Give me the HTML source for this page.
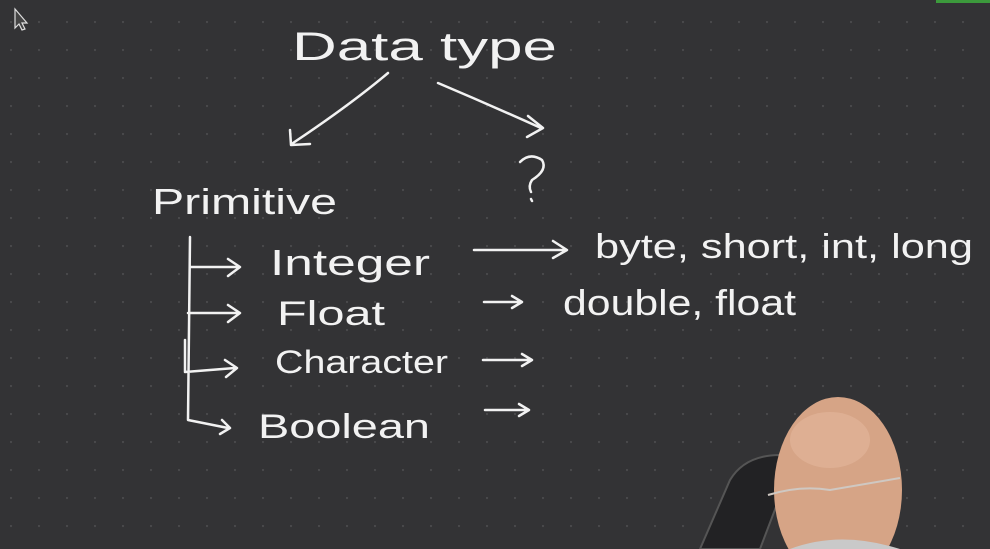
<!DOCTYPE html>
<html><head><style>
html,body{margin:0;padding:0;background:#333335;width:990px;height:549px;overflow:hidden}
svg{position:absolute;left:0;top:0;display:block}
.t{font-family:"Liberation Sans",sans-serif;fill:#f2f2f2;font-weight:normal}
</style></head><body>
<svg width="990" height="549" viewBox="0 0 990 549">
<defs><pattern id="d" x="10" y="21" width="28" height="28" patternUnits="userSpaceOnUse"><circle cx="1" cy="1" r="1.1" fill="#4a4a4c"/></pattern></defs>
<rect width="990" height="549" fill="#333335"/>
<rect width="990" height="549" fill="url(#d)"/>
<rect x="936" y="0" width="54" height="3" fill="#3c9a3c"/>
<path d="M15 9 L15 28 L19 24 L22 30 L25 29 L22 23 L27 23 Z" fill="#444" stroke="#ddd" stroke-width="1.2"/>
<g fill="none" stroke="#f2f2f2" stroke-width="2.5" stroke-linecap="round" stroke-linejoin="round">
<path d="M388 73 Q350 105 293 143 M290 130 L291 145 L310 144"/>
<path d="M438 83 Q490 105 541 128 M528 116 L543 128 L527 137"/>
<path d="M520 162 Q530 152 542 160 Q548 170 532 180 Q528 186 531 192 M531 199 L532 201"/>
<path d="M190 237 L188 420 L228 428 M190 267 L238 267 M228 259 L240 267 L228 276 M188 313 L238 313 M228 305 L240 313 L228 322 M185 340 L185 372 L235 368 M225 360 L237 368 L226 377 M222 420 L230 428 L220 434"/>
<path d="M474 250 L565 250 M553 241 L567 250 L553 258"/>
<path d="M484 302 L520 302 M512 296 L522 302 L512 308"/>
<path d="M483 360 L530 360 M522 354 L532 360 L522 366"/>
<path d="M485 410 L527 410 M519 404 L529 410 L519 416"/>
</g>
<text class="t" x="292" y="60" font-size="40" textLength="265" lengthAdjust="spacingAndGlyphs">Data  type</text>
<text class="t" x="152" y="214" font-size="36" textLength="185" lengthAdjust="spacingAndGlyphs">Primitive</text>
<text class="t" x="270" y="275" font-size="36" textLength="160" lengthAdjust="spacingAndGlyphs">Integer</text>
<text class="t" x="277" y="325" font-size="34" textLength="108" lengthAdjust="spacingAndGlyphs">Float</text>
<text class="t" x="275" y="373" font-size="32" textLength="173" lengthAdjust="spacingAndGlyphs">Character</text>
<text class="t" x="258" y="438" font-size="34" textLength="172" lengthAdjust="spacingAndGlyphs">Boolean</text>
<text class="t" x="595" y="258" font-size="34" textLength="378" lengthAdjust="spacingAndGlyphs">byte, short, int, long</text>
<text class="t" x="563" y="315" font-size="36" textLength="233" lengthAdjust="spacingAndGlyphs">double, float</text>
<path d="M700 549 L730 480 Q745 455 780 455 L790 470 L760 549 Z" fill="#222224" stroke="#555" stroke-width="2"/>
<ellipse cx="838" cy="490" rx="64" ry="93" fill="#d6a486"/>
<ellipse cx="830" cy="440" rx="40" ry="28" fill="#e3b89c" opacity="0.6"/>
<path d="M768 495 Q800 485 830 490 Q860 485 900 478" fill="none" stroke="#cfc8c2" stroke-width="2"/>
<path d="M790 549 Q840 530 900 549 Z" fill="#c9c9c9"/>
</svg>
</body></html>
